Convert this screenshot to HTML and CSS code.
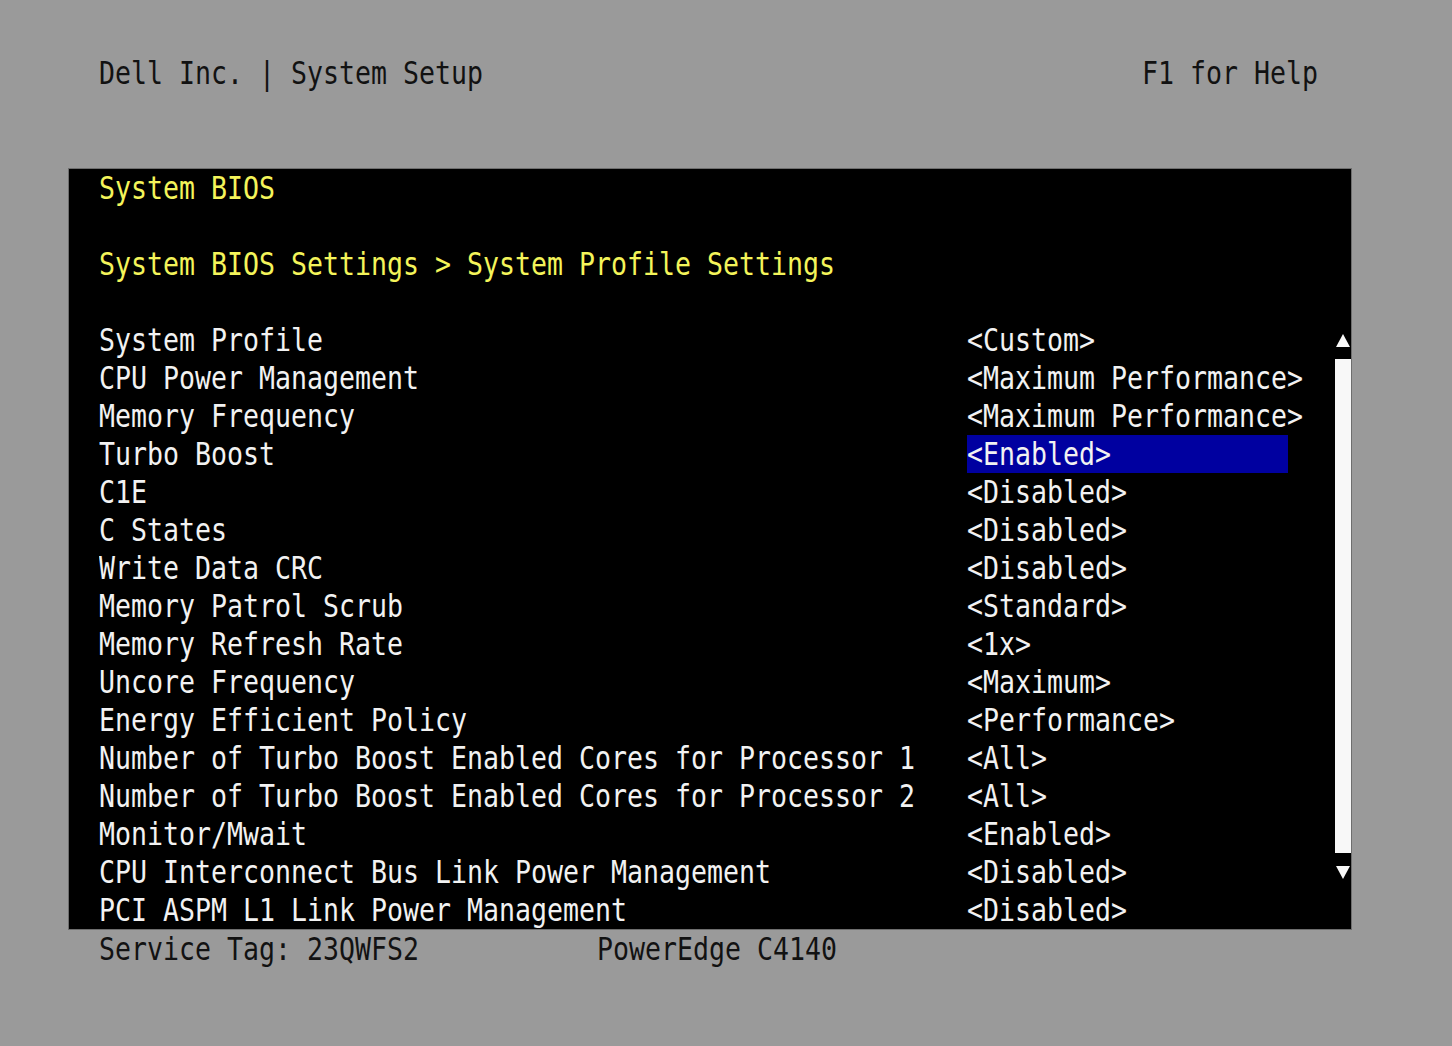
FILE: index.html
```html
<!DOCTYPE html>
<html lang="en">
<head>
  <meta charset="UTF-8">
  <title>System Setup</title>
  <link rel="stylesheet" href="styles.css">
</head>
<body>
  <div class="tela">
    <div class="topo">
      <span class="t">Dell Inc. | System Setup</span>
      <span class="t">F1 for Help</span>
    </div>

    <div class="painel">
      <div class="linha amarelo"><span class="t">System BIOS</span></div>
      <div class="linha"></div>
      <div class="linha amarelo"><span class="t">System BIOS Settings > System Profile Settings</span></div>
      <div class="linha"></div>

      <div class="corpo">
        <div class="lista">
          <div><span class="t">System Profile</span></div>
          <div><span class="t">&lt;Custom&gt;</span></div>
          <div><span class="t">CPU Power Management</span></div>
          <div><span class="t">&lt;Maximum Performance&gt;</span></div>
          <div><span class="t">Memory Frequency</span></div>
          <div><span class="t">&lt;Maximum Performance&gt;</span></div>
          <div><span class="t">Turbo Boost</span></div>
          <div class="sel"><span class="t">&lt;Enabled&gt;</span></div>
          <div><span class="t">C1E</span></div>
          <div><span class="t">&lt;Disabled&gt;</span></div>
          <div><span class="t">C States</span></div>
          <div><span class="t">&lt;Disabled&gt;</span></div>
          <div><span class="t">Write Data CRC</span></div>
          <div><span class="t">&lt;Disabled&gt;</span></div>
          <div><span class="t">Memory Patrol Scrub</span></div>
          <div><span class="t">&lt;Standard&gt;</span></div>
          <div><span class="t">Memory Refresh Rate</span></div>
          <div><span class="t">&lt;1x&gt;</span></div>
          <div><span class="t">Uncore Frequency</span></div>
          <div><span class="t">&lt;Maximum&gt;</span></div>
          <div><span class="t">Energy Efficient Policy</span></div>
          <div><span class="t">&lt;Performance&gt;</span></div>
          <div><span class="t">Number of Turbo Boost Enabled Cores for Processor 1</span></div>
          <div><span class="t">&lt;All&gt;</span></div>
          <div><span class="t">Number of Turbo Boost Enabled Cores for Processor 2</span></div>
          <div><span class="t">&lt;All&gt;</span></div>
          <div><span class="t">Monitor/Mwait</span></div>
          <div><span class="t">&lt;Enabled&gt;</span></div>
          <div><span class="t">CPU Interconnect Bus Link Power Management</span></div>
          <div><span class="t">&lt;Disabled&gt;</span></div>
          <div><span class="t">PCI ASPM L1 Link Power Management</span></div>
          <div><span class="t">&lt;Disabled&gt;</span></div>
        </div>

        <!-- barra de rolagem -->
        <div class="rolagem">
          <div class="seta">
            <svg width="14" height="13" viewBox="0 0 14 13"><polygon points="7,0 14,13 0,13" fill="#f8f8f8"/></svg>
          </div>
          <div class="barra"></div>
          <div class="seta">
            <svg width="14" height="13" viewBox="0 0 14 13"><polygon points="0,0 14,0 7,13" fill="#f8f8f8"/></svg>
          </div>
        </div>
      </div>
    </div>

    <div class="rodape">
      <span class="t tag">Service Tag: 23QWFS2</span>
      <span class="t">PowerEdge C4140</span>
    </div>
  </div>
</body>
</html>
```

FILE: styles.css
```css
body {
  margin: 0;
  background-color: #9a9a9a;
  font-family: "DejaVu Sans Mono", "Liberation Mono", monospace;
  font-size: 26.58px; /* 16px por caractere */
  line-height: 38px;
}

.tela {
  width: 1284px;
  margin-left: 68px;
  padding-top: 54px;
}

/* texto alto e estreito, como a fonte da BIOS */
.t {
  display: inline-block;
  white-space: pre;
  transform: scaleY(1.22);
}

.topo {
  display: flex;
  justify-content: space-between;
  height: 38px;
  padding: 0 34px 0 31px;
  color: #121212;
  margin-bottom: 76px;
}

.painel {
  box-sizing: border-box;
  width: 1284px;
  height: 762px;
  background-color: #000;
  border: 1px solid #6e6e6e;
  padding-left: 30px;
  color: #f2f2f2;
}

.linha {
  height: 38px;
}

.amarelo {
  color: #f4f45a;
}

.corpo {
  display: flex;
}

.lista {
  display: grid;
  grid-template-columns: 868px 321px;
  grid-auto-rows: 38px;
}

.sel {
  background-color: #0000a0;
}

.rolagem {
  display: flex;
  flex-direction: column;
  width: 16px;
  height: 570px;
  margin-left: 47px;
}

.seta {
  height: 38px;
  display: flex;
  align-items: center;
  justify-content: center;
}

.seta svg {
  display: block;
}

.barra {
  flex: 1;
  background-color: #f8f8f8;
}

.rodape {
  display: flex;
  height: 38px;
  padding-left: 31px;
  color: #121212;
}

.tag {
  width: 498px;
}
```
